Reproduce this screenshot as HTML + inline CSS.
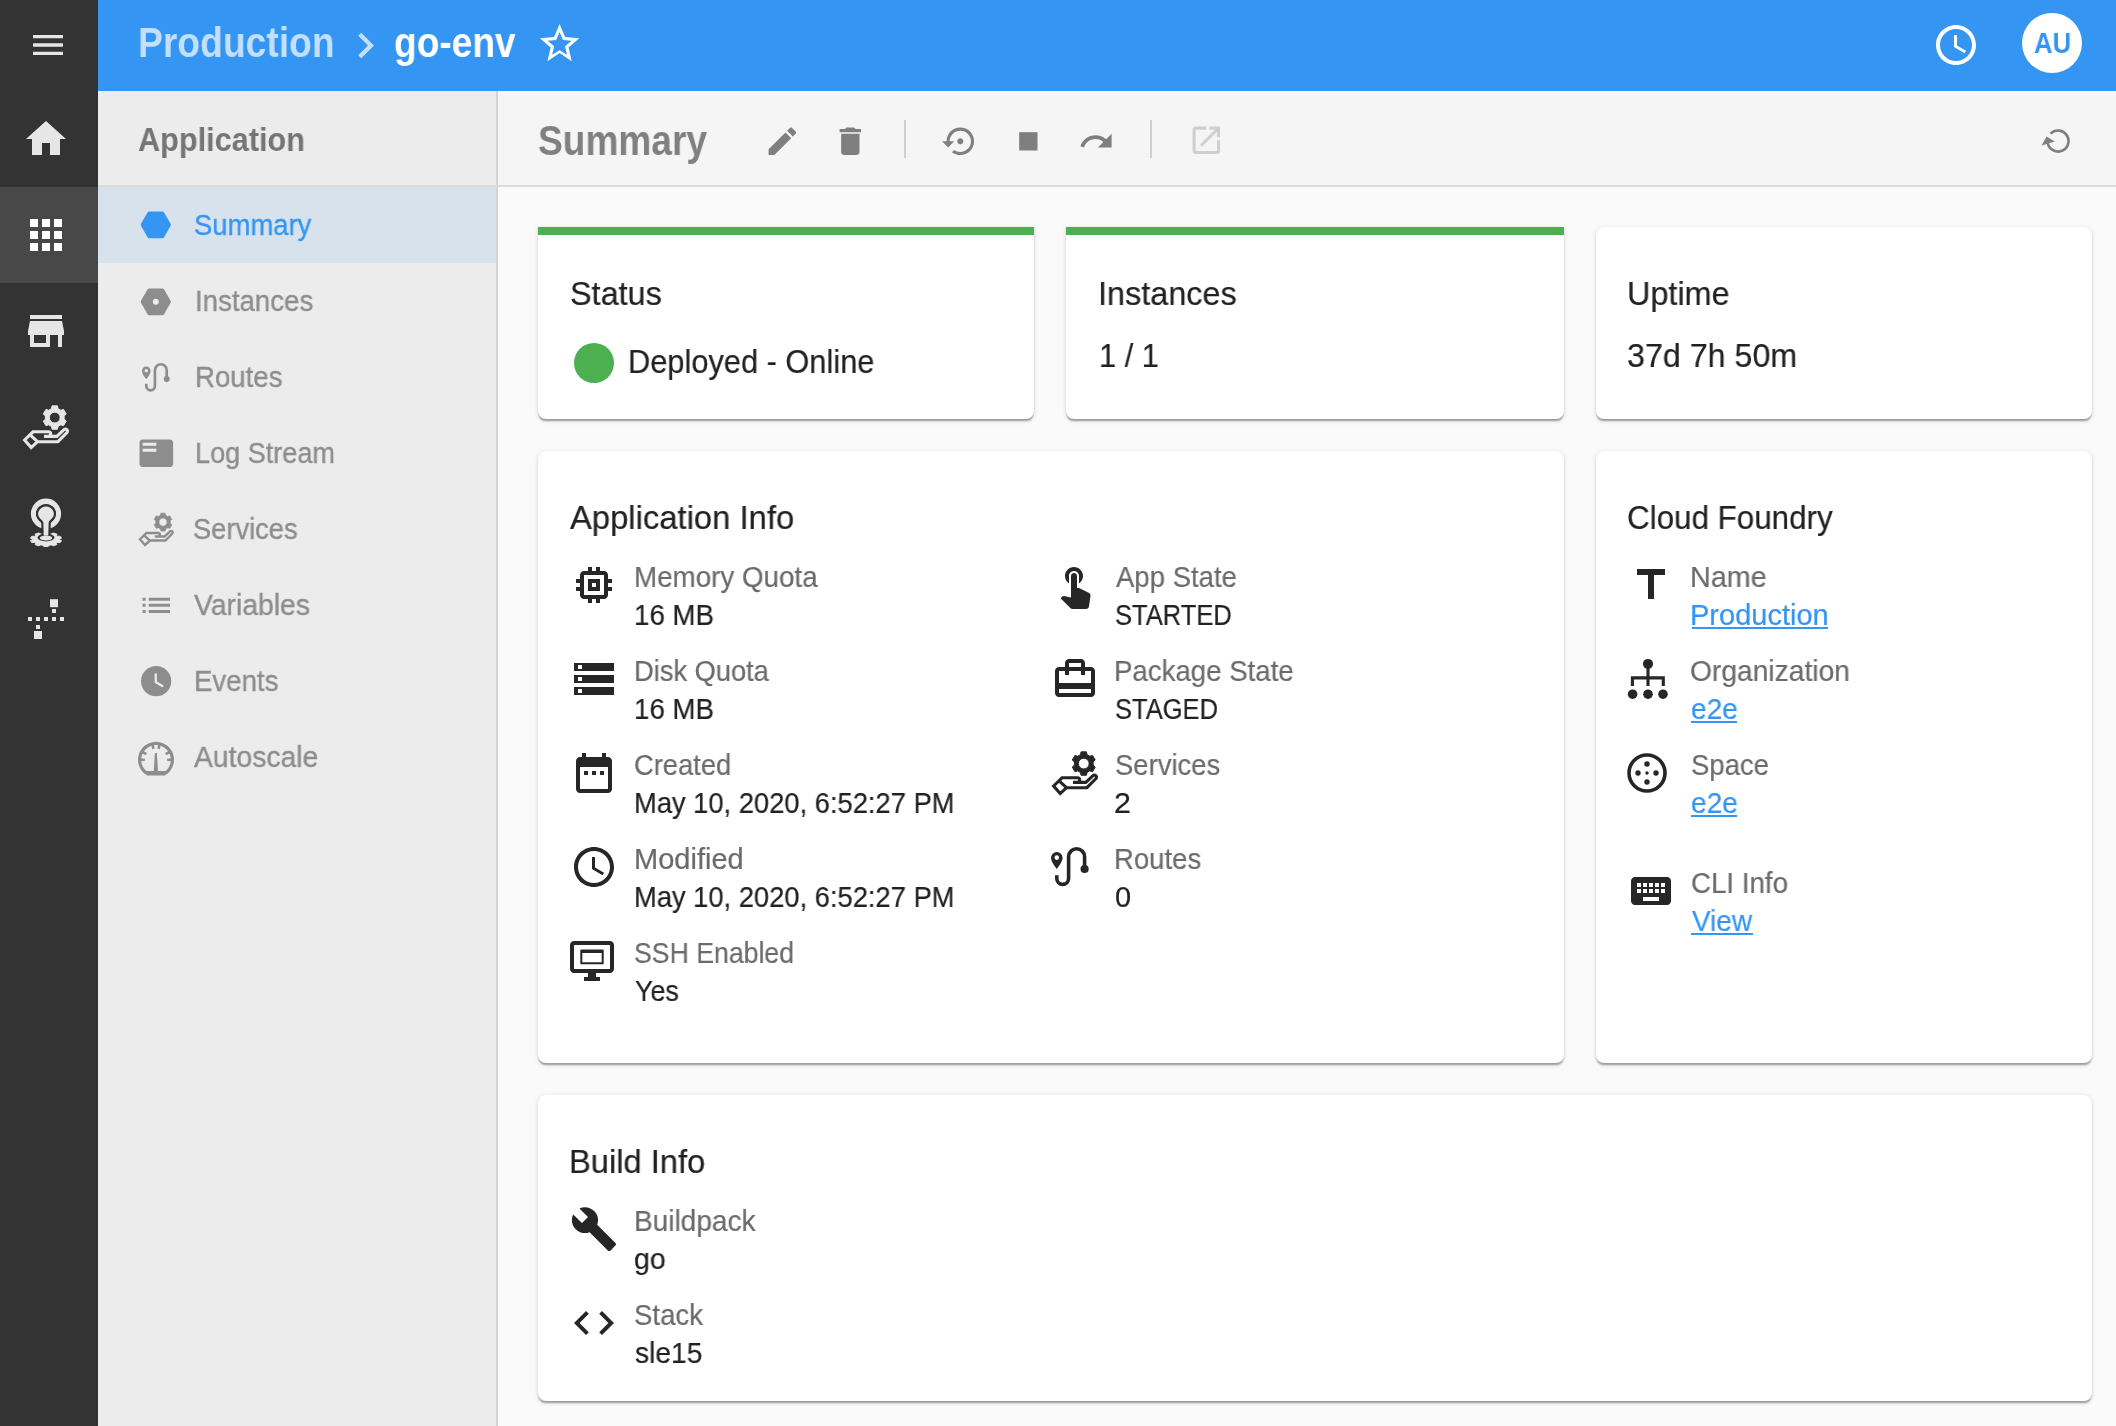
<!DOCTYPE html><html lang="en"><head><meta charset="utf-8"><title>go-env - Summary</title><style>

html,body{margin:0;padding:0;background:#fafafa}
body{width:2116px;height:1426px;position:relative;overflow:hidden;background:#fafafa;font-family:"Liberation Sans", sans-serif;color:#212121}
.b{position:absolute}
.t{position:absolute;white-space:nowrap;line-height:1;transform-origin:0 0;margin:0;font-weight:400;will-change:transform}
.i{position:absolute;display:block;overflow:visible}
.card{position:absolute;background:#fff;border-radius:8px;box-shadow:0 3.3px 1.7px -1.7px rgba(0,0,0,.2),0 1.7px 1.7px 0 rgba(0,0,0,.14),0 1.7px 5.5px 0 rgba(0,0,0,.12)}
.u{position:absolute;height:2px}
a{color:inherit;text-decoration:none}

</style></head><body>
<div class="b" style="left:98px;top:91px;width:399px;height:1335px;background:#ececec"></div>
<div class="b" style="left:496px;top:91px;width:2px;height:1335px;background:#d4d4d4"></div>
<div class="b" style="left:98px;top:187px;width:398px;height:75.7px;background:#d8e2ec"></div>
<div class="b" style="left:498px;top:91px;width:1618px;height:94px;background:#f5f5f5"></div>
<div class="b" style="left:98px;top:185px;width:2018px;height:2px;background:#dadada"></div>
<div class="b" style="left:98px;top:0;width:2018px;height:91px;background:#3595f3"></div>
<div class="b" style="left:0;top:0;width:98px;height:1426px;background:#333333"></div>
<div class="b" style="left:0;top:187px;width:98px;height:96px;background:#484848"></div>
<div class="b" style="left:904px;top:119.5px;width:2px;height:38.5px;background:#d0d0d0"></div>
<div class="b" style="left:1150px;top:119.5px;width:2px;height:38.5px;background:#d0d0d0"></div>
<div class="card" style="left:538px;top:227px;width:496px;height:192px;border-radius:0 0 8px 8px"><div class="b" style="left:0;top:0;width:100%;height:8px;background:#4caf50"></div></div>
<div class="card" style="left:1066px;top:227px;width:498px;height:192px;border-radius:0 0 8px 8px"><div class="b" style="left:0;top:0;width:100%;height:8px;background:#4caf50"></div></div>
<div class="card" style="left:1596px;top:227px;width:496px;height:192px"></div>
<div class="card" style="left:538px;top:451px;width:1026px;height:612px"></div>
<div class="card" style="left:1596px;top:451px;width:496px;height:612px"></div>
<div class="card" style="left:538px;top:1095px;width:1554px;height:306px"></div>
<div class="b" style="left:574px;top:342.8px;width:40px;height:40px;border-radius:50%;background:#4caf50"></div>
<div class="b" style="left:2022px;top:13px;width:60px;height:60px;border-radius:50%;background:#fff"></div>
<aside><svg class="i" style="left:28px;top:25px;width:40px;height:40px" viewBox="0 0 24 24"><path fill="#e6e6e6" d="M3 18h18v-2H3v2zm0-5h18v-2H3v2zm0-7v2h18V6H3z"/></svg>
<svg class="i" style="left:22px;top:115px;width:48px;height:48px" viewBox="0 0 24 24"><path fill="#e6e6e6" d="M10 20v-6h4v6h5v-8h3L12 3 2 12h3v8z"/></svg>
<svg class="i" style="left:22px;top:211px;width:48px;height:48px" viewBox="0 0 24 24"><path fill="#ffffff" d="M4 8h4V4H4v4zm6 12h4v-4h-4v4zm-6 0h4v-4H4v4zm0-6h4v-4H4v4zm6 0h4v-4h-4v4zm6-10v4h4V4h-4zm-6 4h4V4h-4v4zm6 6h4v-4h-4v4zm0 6h4v-4h-4v4z"/></svg>
<svg class="i" style="left:22px;top:307px;width:48px;height:48px" viewBox="0 0 24 24"><path fill="#e6e6e6" d="M20 4H4v2h16V4zm1 10v-2l-1-5H4l-1 5v2h1v6h10v-6h4v6h2v-6h1zm-9 4H6v-4h6v4z"/></svg>
<svg class="i" style="left:22px;top:403px;width:48px;height:48px" viewBox="0 0 24 24"><path fill="#e6e6e6" fill-rule="evenodd" stroke="#e6e6e6" stroke-width=".5" stroke-linejoin="round" d="M18 2.82 L17.73 1.43 L15.03 1.43 L14.76 2.82 L13.33 3.64 L11.99 3.19 L10.64 5.53 L11.7 6.46 L11.7 8.1 L10.64 9.03 L11.99 11.37 L13.33 10.92 L14.76 11.74 L15.03 13.13 L17.73 13.13 L18 11.74 L19.43 10.92 L20.77 11.37 L22.12 9.03 L21.06 8.1 L21.06 6.46 L22.12 5.53 L20.77 3.19 L19.43 3.64ZM13.68 7.28a2.7 2.7 0 1 0 5.4 0a2.7 2.7 0 1 0 -5.4 0Z"/><path fill="none" stroke="#e6e6e6" stroke-width="1.55" stroke-linejoin="miter" stroke-linecap="butt" d="M1.3 18.5L5.5 14.4H13.2a1.15 1.15 0 0 1 0 2.3H11 17.4L21.0 13.3a1.05 1.05 0 0 1 1.5 1.45L17.95 19.35H7.75L4.6 22.3ZM4.05 15.95L7.75 19.35"/></svg>
<svg class="i" style="left:22px;top:499px;width:48px;height:48px" viewBox="0 0 48 48"><circle cx="24" cy="14.7" r="12.45" fill="none" stroke="#e6e6e6" stroke-width="5.3"/><polygon fill="#e6e6e6" stroke="#e6e6e6" stroke-width="1" stroke-linejoin="round" points="37.55,40.92 39.56,41.65 38.2,43.56 35.66,43.49 34.26,44.34 34.98,45.58 31.42,46.76 29.31,45.92 27.06,46.25 26.2,47.53 21.8,47.53 20.94,46.25 18.69,45.92 16.58,46.76 13.02,45.58 13.74,44.34 12.34,43.49 9.8,43.56 8.44,41.65 10.45,40.92 10.45,39.88 8.44,39.15 9.8,37.24 12.34,37.31 13.74,36.46 13.02,35.22 16.58,34.04 18.69,34.88 20.94,34.55 21.8,33.27 26.2,33.27 27.06,34.55 29.31,34.88 31.42,34.04 34.98,35.22 34.26,36.46 35.66,37.31 38.2,37.24 39.56,39.15 37.55,39.88"/><ellipse cx="24" cy="38.5" rx="8.45" ry="3.9" fill="#333333"/><path d="M24 7.4C28.4 7.4 31.9 10.9 31.9 15C31.9 18.5 28 20.5 26.65 23.4L26.3 36.4H21.7L21.35 23.4C20 20.5 16.1 18.5 16.1 15C16.1 10.9 19.6 7.4 24 7.4Z" fill="#333333" stroke="#333333" stroke-width="4.3" stroke-linejoin="round"/><path d="M24 7.4C28.4 7.4 31.9 10.9 31.9 15C31.9 18.5 28 20.5 26.65 23.4L26.3 36.4H21.7L21.35 23.4C20 20.5 16.1 18.5 16.1 15C16.1 10.9 19.6 7.4 24 7.4Z" fill="#e6e6e6"/><ellipse cx="24" cy="39" rx="6.2" ry="2.4" fill="#e6e6e6"/></svg>
<svg class="i" style="left:22px;top:595px;width:48px;height:48px" viewBox="0 0 48 48"><rect x="28" y="4.2" width="8" height="8" fill="#e6e6e6"/><rect x="30" y="14" width="4" height="4" fill="#e6e6e6"/><rect x="6" y="22" width="4" height="4" fill="#e6e6e6"/><rect x="14" y="22" width="4" height="4" fill="#e6e6e6"/><rect x="22" y="22" width="4" height="4" fill="#e6e6e6"/><rect x="30" y="22" width="4" height="4" fill="#e6e6e6"/><rect x="38" y="22" width="4" height="4" fill="#e6e6e6"/><rect x="14" y="30" width="4" height="4" fill="#e6e6e6"/><rect x="12" y="36" width="8" height="8" fill="#e6e6e6"/></svg></aside>
<header><svg class="i" style="left:340px;top:19.75px;width:51px;height:51px" viewBox="0 0 24 24"><path fill="#c2dffb" d="M10 6L8.59 7.41 13.17 12l-4.58 4.59L10 18l6-6z"/></svg>
<svg class="i" style="left:536.35px;top:19.6px;width:47.2px;height:47.2px" viewBox="0 0 24 24"><path fill="#ffffff" d="M22 9.24l-7.19-.62L12 2 9.19 8.63 2 9.24l5.46 4.73L5.82 21 12 16.77 18.18 21l-1.63-7.03L22 9.24zM12 15.4l-3.76 2.27 1-4.28-3.32-2.88 4.38-.38L12 6.1l1.71 4.04 4.38.38-3.32 2.88 1 4.28L12 15.4z"/></svg>
<svg class="i" style="left:1932px;top:21px;width:48px;height:48px" viewBox="0 0 24 24"><path fill="#ffffff" d="M11.99 2C6.47 2 2 6.48 2 12s4.47 10 9.99 10C17.52 22 22 17.52 22 12S17.52 2 11.99 2zM12 20c-4.42 0-8-3.58-8-8s3.58-8 8-8 8 3.58 8 8-3.58 8-8 8zm.5-13H11v6l5.25 3.15.75-1.23-4.5-2.67z"/></svg>
<span class="t" style="left:137.67px;top:21.84px;font-size:42px;color:#c2dffb;transform:scaleX(0.8871);font-weight:700">Production</span>
<span class="t" style="left:394.14px;top:21.84px;font-size:42px;color:#ffffff;transform:scaleX(0.8835);font-weight:700">go-env</span>
<span class="t" style="left:2033.5px;top:28.85px;font-size:29px;color:#3595f3;transform:scaleX(0.8856);font-weight:700">AU</span></header>
<nav><svg class="i" style="left:139.2px;top:208.4px;width:33.6px;height:33.6px" viewBox="0 0 33.6 33.6"><polygon fill="#3595f3" stroke="#3595f3" stroke-width="4" stroke-linejoin="round" points="29.9,16.8 23.35,28.14 10.25,28.14 3.7,16.8 10.25,5.46 23.35,5.46"/></svg>
<svg class="i" style="left:139.4px;top:284.6px;width:33.6px;height:33.6px" viewBox="0 0 33.6 33.6"><polygon fill="#8d8d8d" stroke="#8d8d8d" stroke-width="4" stroke-linejoin="round" points="29.9,16.8 23.35,28.14 10.25,28.14 3.7,16.8 10.25,5.46 23.35,5.46"/><circle cx="16.8" cy="16.8" r="3" fill="#ececec"/></svg>
<svg class="i" style="left:142.25px;top:360.45px;width:35.3px;height:35.3px" viewBox="0 0 24 24"><path fill="#8d8d8d" d="M2.9 4.5a2.9 2.9 0 0 0 -2.9 2.9c0 2.2 2.9 5.6 2.9 5.6s2.9-3.4 2.9-5.6a2.9 2.9 0 0 0 -2.9-2.9z"/><circle cx="2.9" cy="7.3" r="1.15" fill="#ececec"/><path fill="none" stroke="#8d8d8d" stroke-width="1.8" d="M2.9 16.1v1.65a2.95 2.95 0 0 0 5.9 0V6.9a4 4 0 0 1 8 0V13"/><circle cx="16.8" cy="13" r="2.05" fill="#8d8d8d"/></svg>
<svg class="i" style="left:137.76px;top:434.67px;width:36.67px;height:36.67px" viewBox="0 0 24 24"><path fill="#8d8d8d" d="M21 3H3c-1.1 0-2 .9-2 2v14c0 1.1.9 2 2 2h18c1.1 0 2-.9 2-2V5c0-1.1-.9-2-2-2zm-9 8H3V9h9v2zm0-4H3V5h9v2z"/></svg>
<svg class="i" style="left:137.76px;top:511.27px;width:36.67px;height:36.67px" viewBox="0 0 24 24"><path fill="#8d8d8d" fill-rule="evenodd" stroke="#8d8d8d" stroke-width=".5" stroke-linejoin="round" d="M18 2.82 L17.73 1.43 L15.03 1.43 L14.76 2.82 L13.33 3.64 L11.99 3.19 L10.64 5.53 L11.7 6.46 L11.7 8.1 L10.64 9.03 L11.99 11.37 L13.33 10.92 L14.76 11.74 L15.03 13.13 L17.73 13.13 L18 11.74 L19.43 10.92 L20.77 11.37 L22.12 9.03 L21.06 8.1 L21.06 6.46 L22.12 5.53 L20.77 3.19 L19.43 3.64ZM13.68 7.28a2.7 2.7 0 1 0 5.4 0a2.7 2.7 0 1 0 -5.4 0Z"/><path fill="none" stroke="#8d8d8d" stroke-width="1.55" stroke-linejoin="miter" stroke-linecap="butt" d="M1.3 18.5L5.5 14.4H13.2a1.15 1.15 0 0 1 0 2.3H11 17.4L21.0 13.3a1.05 1.05 0 0 1 1.5 1.45L17.95 19.35H7.75L4.6 22.3ZM4.05 15.95L7.75 19.35"/></svg>
<svg class="i" style="left:137.86px;top:586.66px;width:36.67px;height:36.67px" viewBox="0 0 24 24"><path fill="#8d8d8d" d="M3 13h2v-2H3v2zm0 4h2v-2H3v2zm0-8h2V7H3v2zm4 4h14v-2H7v2zm0 4h14v-2H7v2zM7 7v2h14V7H7z"/></svg>
<svg class="i" style="left:137.65px;top:662.65px;width:36.3px;height:36.3px" viewBox="0 0 24 24"><path fill="#8d8d8d" d="M12 2C6.5 2 2 6.5 2 12s4.5 10 10 10 10-4.5 10-10S17.5 2 12 2zm4.2 14.2L11 13V7h1.5v5.2l4.5 2.7-.8 1.3z"/></svg>
<svg class="i" style="left:136px;top:739px;width:40px;height:40px" viewBox="0 0 40 40"><path fill="#8d8d8d" fill-rule="evenodd" d="M11.38 36.6A18 18 0 1 1 28.62 36.6ZM10.44 32.1A14.8 14.8 0 1 1 29.56 32.1Z"/><path fill="#8d8d8d" d="M18.9 13.9h2l1.15 19h-4.3z"/><path stroke="#8d8d8d" stroke-width="2.6" d="M4.5 20.8L8.8 20.8"/><path stroke="#8d8d8d" stroke-width="2.6" d="M6.58 13.05L10.3 15.2"/><path stroke="#8d8d8d" stroke-width="2.6" d="M16.51 5.7L17.48 9.89"/><path stroke="#8d8d8d" stroke-width="2.6" d="M23.49 5.7L22.52 9.89"/><path stroke="#8d8d8d" stroke-width="2.6" d="M33.42 13.05L29.7 15.2"/><path stroke="#8d8d8d" stroke-width="2.6" d="M35.5 20.8L31.2 20.8"/></svg>
<span class="t" style="left:137.52px;top:123.46px;font-size:33px;color:#757575;transform:scaleX(0.9293);font-weight:700">Application</span>
<span class="t" style="left:193.89px;top:210.85px;font-size:29px;color:#3595f3;transform:scaleX(0.9459);-webkit-text-stroke:.35px #3595f3">Summary</span>
<span class="t" style="left:194.54px;top:286.85px;font-size:29px;color:#8d8d8d;transform:scaleX(0.9524);-webkit-text-stroke:.35px #8d8d8d">Instances</span>
<span class="t" style="left:194.54px;top:362.85px;font-size:29px;color:#8d8d8d;transform:scaleX(0.9514);-webkit-text-stroke:.35px #8d8d8d">Routes</span>
<span class="t" style="left:194.59px;top:438.85px;font-size:29px;color:#8d8d8d;transform:scaleX(0.9333);-webkit-text-stroke:.35px #8d8d8d">Log Stream</span>
<span class="t" style="left:193.45px;top:514.85px;font-size:29px;color:#8d8d8d;transform:scaleX(0.9407);-webkit-text-stroke:.35px #8d8d8d">Services</span>
<span class="t" style="left:194.3px;top:590.85px;font-size:29px;color:#8d8d8d;transform:scaleX(0.9767);-webkit-text-stroke:.35px #8d8d8d">Variables</span>
<span class="t" style="left:193.84px;top:666.85px;font-size:29px;color:#8d8d8d;transform:scaleX(0.9522);-webkit-text-stroke:.35px #8d8d8d">Events</span>
<span class="t" style="left:194.3px;top:742.85px;font-size:29px;color:#8d8d8d;transform:scaleX(0.9756);-webkit-text-stroke:.35px #8d8d8d">Autoscale</span></nav>
<main><section><svg class="i" style="left:763.91px;top:122.66px;width:36.67px;height:36.67px" viewBox="0 0 24 24"><path fill="#7f7f7f" d="M3 17.25V21h3.75L17.81 9.94l-3.75-3.75L3 17.25zM20.71 7.04c.39-.39.39-1.02 0-1.41l-2.34-2.34c-.39-.39-1.02-.39-1.41 0l-1.83 1.83 3.75 3.75 1.83-1.83z"/></svg>
<svg class="i" style="left:832.26px;top:122.66px;width:36.67px;height:36.67px" viewBox="0 0 24 24"><path fill="#7f7f7f" d="M6 19c0 1.1.9 2 2 2h8c1.1 0 2-.9 2-2V7H6v12zM19 4h-3.5l-1-1h-5l-1 1H5v2h14V4z"/></svg>
<svg class="i" style="left:942.16px;top:122.66px;width:36.67px;height:36.67px" viewBox="0 0 24 24"><path fill="#7f7f7f" d="M14 12c0-1.1-.9-2-2-2s-2 .9-2 2 .9 2 2 2 2-.9 2-2zm-2-9c-4.97 0-9 4.03-9 9H0l4 4 4-4H5c0-3.87 3.13-7 7-7s7 3.13 7 7-3.13 7-7 7c-1.51 0-2.91-.49-4.06-1.3l-1.42 1.44C8.04 20.3 9.94 21 12 21c4.97 0 9-4.03 9-9s-4.03-9-9-9z"/></svg>
<svg class="i" style="left:1009.76px;top:122.66px;width:36.67px;height:36.67px" viewBox="0 0 24 24"><path fill="#7f7f7f" d="M6 6h12v12H6z"/></svg>
<svg class="i" style="left:1078.37px;top:122.66px;width:36.67px;height:36.67px" viewBox="0 0 24 24"><path fill="#7f7f7f" d="M18.4 10.6C16.55 8.99 14.15 8 11.5 8c-4.65 0-8.58 3.03-9.96 7.22L3.9 16c1.05-3.19 4.05-5.5 7.6-5.5 1.95 0 3.73.72 5.12 1.88L13 16h9V7l-3.6 3.6z"/></svg>
<svg class="i" style="left:1187.91px;top:122.41px;width:36.67px;height:36.67px" viewBox="0 0 24 24"><path fill="#cfcfcf" d="M19 19H5V5h7V3H5c-1.11 0-2 .9-2 2v14c0 1.1.89 2 2 2h14c1.1 0 2-.9 2-2v-7h-2v7zM14 3v2h3.59l-9.83 9.83 1.41 1.41L19 6.41V10h2V3h-7z"/></svg>
<svg class="i" style="left:2038.3px;top:120.8px;width:40px;height:40px" viewBox="0 0 40 40"><path fill="none" stroke="#7f7f7f" stroke-width="2.7" d="M12.58 12.58A10.5 10.5 0 1 1 9.53 20.73"/><polygon fill="#7f7f7f" points="8.6,15.6 16.9,20.45 3.6,24.6"/></svg>
<span class="t" style="left:538.22px;top:119.84px;font-size:42px;color:#808080;transform:scaleX(0.8831);font-weight:700">Summary</span></section>
<section><svg class="i" style="left:570px;top:561px;width:48px;height:48px" viewBox="0 0 24 24"><path fill="#262626" d="M15 9H9v6h6V9zm-2 4h-2v-2h2v2zm8-2V9h-2V7c0-1.1-.9-2-2-2h-2V3h-2v2h-2V3H9v2H7c-1.1 0-2 .9-2 2v2H3v2h2v2H3v2h2v2c0 1.1.9 2 2 2h2v2h2v-2h2v2h2v-2h2c1.1 0 2-.9 2-2v-2h2v-2h-2v-2h2zm-4 6H7V7h10v10z"/></svg>
<svg class="i" style="left:570px;top:655px;width:48px;height:48px" viewBox="0 0 24 24"><path fill="#262626" d="M2 20h20v-4H2v4zm2-3h2v2H4v-2zM2 4v4h20V4H2zm4 3H4V5h2v2zm-4 7h20v-4H2v4zm2-3h2v2H4v-2z"/></svg>
<svg class="i" style="left:570.1px;top:748.8px;width:48px;height:48px" viewBox="0 0 24 24"><path fill="#262626" d="M9 11H7v2h2v-2zm4 0h-2v2h2v-2zm4 0h-2v2h2v-2zm2-7h-1V2h-2v2H8V2H6v2H5c-1.11 0-1.99.9-1.99 2L3 20c0 1.1.89 2 2 2h14c1.1 0 2-.9 2-2V6c0-1.1-.9-2-2-2zm0 16H5V9h14v11z"/></svg>
<svg class="i" style="left:569.9px;top:842.8px;width:48px;height:48px" viewBox="0 0 24 24"><path fill="#262626" d="M11.99 2C6.47 2 2 6.48 2 12s4.47 10 9.99 10C17.52 22 22 17.52 22 12S17.52 2 11.99 2zM12 20c-4.42 0-8-3.58-8-8s3.58-8 8-8 8 3.58 8 8-3.58 8-8 8zm.5-13H11v6l5.25 3.15.75-1.23-4.5-2.67z"/></svg>
<svg class="i" style="left:567.9px;top:937.2px;width:48px;height:48px" viewBox="0 0 24 24"><path fill="#262626" d="M21 2H3c-1.1 0-2 .9-2 2v12c0 1.1.9 2 2 2h7v2H8v2h8v-2h-2v-2h7c1.1 0 2-.9 2-2V4c0-1.1-.9-2-2-2zm0 14H3V4h18v12z"/><path fill="#262626" fill-rule="evenodd" d="M6.65 6.2h10.7c.3 0 .5.2.5.5v6.4c0 .3-.2.5-.5.5H6.65c-.3 0-.5-.2-.5-.5V6.7c0-.3.2-.5.5-.5zM7.15 8v4.65h9.7V8z"/></svg>
<svg class="i" style="left:1051px;top:561px;width:48px;height:48px" viewBox="0 0 24 24"><path fill="#262626" d="M9 11.24V7.5C9 6.12 10.12 5 11.5 5S14 6.12 14 7.5v3.74c1.21-.81 2-2.18 2-3.74C16 5.01 13.99 3 11.5 3S7 5.01 7 7.5c0 1.56.79 2.93 2 3.74zm9.84 4.63l-4.54-2.26c-.17-.07-.35-.11-.54-.11H13v-6c0-.83-.67-1.5-1.5-1.5S10 6.67 10 7.5v10.74l-3.43-.72c-.08-.01-.15-.03-.24-.03-.31 0-.59.13-.79.33l-.79.8 4.94 4.94c.27.27.65.44 1.06.44h6.79c.75 0 1.33-.55 1.44-1.28l.75-5.27c.01-.07.02-.14.02-.2 0-.62-.38-1.16-.91-1.38z"/></svg>
<svg class="i" style="left:1050.8px;top:655px;width:48px;height:48px" viewBox="0 0 24 24"><path fill="#262626" d="M20 6h-3V4c0-1.11-.89-2-2-2H9c-1.11 0-2 .89-2 2v2H4c-1.11 0-2 .89-2 2v11c0 1.11.89 2 2 2h16c1.11 0 2-.89 2-2V8c0-1.11-.89-2-2-2zM9 4h6v2H9V4zm11 15H4v-2h16v2zm0-5H4V8h3v2h2V8h6v2h2V8h3v6z"/></svg>
<svg class="i" style="left:1051px;top:749px;width:48px;height:48px" viewBox="0 0 24 24"><path fill="#262626" fill-rule="evenodd" stroke="#262626" stroke-width=".5" stroke-linejoin="round" d="M18 2.82 L17.73 1.43 L15.03 1.43 L14.76 2.82 L13.33 3.64 L11.99 3.19 L10.64 5.53 L11.7 6.46 L11.7 8.1 L10.64 9.03 L11.99 11.37 L13.33 10.92 L14.76 11.74 L15.03 13.13 L17.73 13.13 L18 11.74 L19.43 10.92 L20.77 11.37 L22.12 9.03 L21.06 8.1 L21.06 6.46 L22.12 5.53 L20.77 3.19 L19.43 3.64ZM13.68 7.28a2.7 2.7 0 1 0 5.4 0a2.7 2.7 0 1 0 -5.4 0Z"/><path fill="none" stroke="#262626" stroke-width="1.55" stroke-linejoin="miter" stroke-linecap="butt" d="M1.3 18.5L5.5 14.4H13.2a1.15 1.15 0 0 1 0 2.3H11 17.4L21.0 13.3a1.05 1.05 0 0 1 1.5 1.45L17.95 19.35H7.75L4.6 22.3ZM4.05 15.95L7.75 19.35"/></svg>
<svg class="i" style="left:1051px;top:843px;width:48px;height:48px" viewBox="0 0 24 24"><path fill="#262626" d="M2.9 4.5a2.9 2.9 0 0 0 -2.9 2.9c0 2.2 2.9 5.6 2.9 5.6s2.9-3.4 2.9-5.6a2.9 2.9 0 0 0 -2.9-2.9z"/><circle cx="2.9" cy="7.3" r="1.15" fill="#ffffff"/><path fill="none" stroke="#262626" stroke-width="1.8" d="M2.9 16.1v1.65a2.95 2.95 0 0 0 5.9 0V6.9a4 4 0 0 1 8 0V13"/><circle cx="16.8" cy="13" r="2.05" fill="#262626"/></svg>
<svg class="i" style="left:1627.1px;top:561px;width:48px;height:48px" viewBox="0 0 24 24"><path fill="#262626" d="M5 4v3h5.5v12h3V7H19V4z"/></svg>
<svg class="i" style="left:1623.5px;top:655px;width:48px;height:48px" viewBox="0 0 48 48"><circle cx="24" cy="8.9" r="5" fill="#262626"/><circle cx="8.6" cy="39.2" r="4.8" fill="#262626"/><circle cx="24" cy="39.2" r="4.8" fill="#262626"/><circle cx="39" cy="39.2" r="4.8" fill="#262626"/><path fill="none" stroke="#262626" stroke-width="3.1" d="M24 10V31M8.4 31V22.9H39.3V31"/></svg>
<svg class="i" style="left:1623.05px;top:749.2px;width:48px;height:48px" viewBox="0 0 48 48"><circle cx="24" cy="24" r="18" fill="none" stroke="#262626" stroke-width="3.6"/><circle cx="24" cy="15" r="2.7" fill="#262626"/><circle cx="24" cy="33" r="2.7" fill="#262626"/><circle cx="15" cy="24" r="2.7" fill="#262626"/><circle cx="33" cy="24" r="2.7" fill="#262626"/><circle cx="24" cy="24" r="1.7" fill="#262626"/></svg>
<svg class="i" style="left:1627.2px;top:866.9px;width:48px;height:48px" viewBox="0 0 24 24"><path fill="#262626" d="M20 5H4c-1.1 0-1.99.9-1.99 2L2 17c0 1.1.9 2 2 2h16c1.1 0 2-.9 2-2V7c0-1.1-.9-2-2-2zm-9 3h2v2h-2V8zm0 3h2v2h-2v-2zM8 8h2v2H8V8zm0 3h2v2H8v-2zm-1 2H5v-2h2v2zm0-3H5V8h2v2zm9 7H8v-2h8v2zm0-4h-2v-2h2v2zm0-3h-2V8h2v2zm3 3h-2v-2h2v2zm0-3h-2V8h2v2z"/></svg>
<svg class="i" style="left:570px;top:1205px;width:48px;height:48px" viewBox="0 0 24 24"><path fill="#262626" d="M22.7 19l-9.1-9.1c.9-2.3.4-5-1.5-6.9-2-2-5-2.4-7.4-1.3L9 6 6 9 1.6 4.7C.4 7.1.9 10.1 2.9 12.1c1.9 1.9 4.6 2.4 6.9 1.5l9.1 9.1c.4.4 1 .4 1.4 0l2.3-2.3c.5-.4.5-1.1.1-1.4z"/></svg>
<svg class="i" style="left:570px;top:1299px;width:48px;height:48px" viewBox="0 0 24 24"><path fill="#262626" d="M9.4 16.6L4.8 12l4.6-4.6L8 6l-6 6 6 6 1.4-1.4zm5.2 0l4.6-4.6-4.6-4.6L16 6l6 6-6 6-1.4-1.4z"/></svg>
<span class="t" style="left:569.69px;top:277.04px;font-size:33.5px;color:#212121;transform:scaleX(0.9669);-webkit-text-stroke:.2px #212121">Status</span>
<span class="t" style="left:628.1px;top:345.04px;font-size:33.5px;color:#212121;transform:scaleX(0.9189);-webkit-text-stroke:.2px #212121">Deployed - Online</span>
<span class="t" style="left:1098.37px;top:277.04px;font-size:33.5px;color:#212121;transform:scaleX(0.9669);-webkit-text-stroke:.2px #212121">Instances</span>
<span class="t" style="left:1098.98px;top:339.04px;font-size:33.5px;color:#212121;transform:scaleX(0.9185);-webkit-text-stroke:.2px #212121">1 / 1</span>
<span class="t" style="left:1626.98px;top:277.04px;font-size:33.5px;color:#212121;transform:scaleX(0.9668);-webkit-text-stroke:.2px #212121">Uptime</span>
<span class="t" style="left:1627.49px;top:339.04px;font-size:33.5px;color:#212121;transform:scaleX(0.9618);-webkit-text-stroke:.2px #212121">37d 7h 50m</span>
<span class="t" style="left:570.4px;top:501.04px;font-size:33.5px;color:#212121;transform:scaleX(0.9786);-webkit-text-stroke:.2px #212121">Application Info</span>
<span class="t" style="left:1626.53px;top:501.04px;font-size:33.5px;color:#212121;transform:scaleX(0.9360);-webkit-text-stroke:.2px #212121">Cloud Foundry</span>
<span class="t" style="left:569.05px;top:1145.04px;font-size:33.5px;color:#212121;transform:scaleX(0.9757);-webkit-text-stroke:.2px #212121">Build Info</span>
<span class="t" style="left:633.73px;top:562.85px;font-size:29px;color:#6b6b6b;transform:scaleX(0.9573);-webkit-text-stroke:.2px #6b6b6b">Memory Quota</span>
<span class="t" style="left:634.17px;top:600.85px;font-size:29px;color:#212121;transform:scaleX(0.9544);-webkit-text-stroke:.2px #212121">16 MB</span>
<span class="t" style="left:633.77px;top:656.85px;font-size:29px;color:#6b6b6b;transform:scaleX(0.9398);-webkit-text-stroke:.2px #6b6b6b">Disk Quota</span>
<span class="t" style="left:634.17px;top:694.85px;font-size:29px;color:#212121;transform:scaleX(0.9544);-webkit-text-stroke:.2px #212121">16 MB</span>
<span class="t" style="left:634.02px;top:750.85px;font-size:29px;color:#6b6b6b;transform:scaleX(0.9423);-webkit-text-stroke:.2px #6b6b6b">Created</span>
<span class="t" style="left:633.67px;top:788.85px;font-size:29px;color:#212121;transform:scaleX(0.9421);-webkit-text-stroke:.2px #212121">May 10, 2020, 6:52:27 PM</span>
<span class="t" style="left:633.63px;top:844.85px;font-size:29px;color:#6b6b6b;transform:scaleX(1.0008);-webkit-text-stroke:.2px #6b6b6b">Modified</span>
<span class="t" style="left:633.67px;top:882.85px;font-size:29px;color:#212121;transform:scaleX(0.9421);-webkit-text-stroke:.2px #212121">May 10, 2020, 6:52:27 PM</span>
<span class="t" style="left:634.47px;top:938.85px;font-size:29px;color:#6b6b6b;transform:scaleX(0.9191);-webkit-text-stroke:.2px #6b6b6b">SSH Enabled</span>
<span class="t" style="left:634.78px;top:976.85px;font-size:29px;color:#212121;transform:scaleX(0.9271);-webkit-text-stroke:.2px #212121">Yes</span>
<span class="t" style="left:1115.75px;top:562.85px;font-size:29px;color:#6b6b6b;transform:scaleX(0.9489);-webkit-text-stroke:.2px #6b6b6b">App State</span>
<span class="t" style="left:1114.95px;top:600.85px;font-size:29px;color:#212121;transform:scaleX(0.8795);-webkit-text-stroke:.2px #212121">STARTED</span>
<span class="t" style="left:1114.44px;top:656.85px;font-size:29px;color:#6b6b6b;transform:scaleX(0.9526);-webkit-text-stroke:.2px #6b6b6b">Package State</span>
<span class="t" style="left:1114.95px;top:694.85px;font-size:29px;color:#212121;transform:scaleX(0.8791);-webkit-text-stroke:.2px #212121">STAGED</span>
<span class="t" style="left:1114.89px;top:750.85px;font-size:29px;color:#6b6b6b;transform:scaleX(0.9462);-webkit-text-stroke:.2px #6b6b6b">Services</span>
<span class="t" style="left:1114.33px;top:788.85px;font-size:29px;color:#212121;transform:scaleX(1.0483);-webkit-text-stroke:.2px #212121">2</span>
<span class="t" style="left:1114.45px;top:844.85px;font-size:29px;color:#6b6b6b;transform:scaleX(0.9486);-webkit-text-stroke:.2px #6b6b6b">Routes</span>
<span class="t" style="left:1114.86px;top:882.85px;font-size:29px;color:#212121;transform:scaleX(0.9828);-webkit-text-stroke:.2px #212121">0</span>
<span class="t" style="left:1690.15px;top:562.85px;font-size:29px;color:#6b6b6b;transform:scaleX(0.9917);-webkit-text-stroke:.2px #6b6b6b">Name</span>
<span class="t" style="left:1690.14px;top:600.85px;font-size:29px;color:#3595f3;transform:scaleX(0.9989);-webkit-text-stroke:.2px #3595f3"><a>Production</a></span><div class="u" style="left:1691.9px;top:627.2px;width:136.1px;background:#3595f3"></div>
<span class="t" style="left:1690.38px;top:656.85px;font-size:29px;color:#6b6b6b;transform:scaleX(0.9725);-webkit-text-stroke:.2px #6b6b6b">Organization</span>
<span class="t" style="left:1690.82px;top:694.85px;font-size:29px;color:#3595f3;transform:scaleX(0.9675);-webkit-text-stroke:.2px #3595f3"><a>e2e</a></span><div class="u" style="left:1691.2px;top:721.2px;width:46.3px;background:#3595f3"></div>
<span class="t" style="left:1690.84px;top:750.85px;font-size:29px;color:#6b6b6b;transform:scaleX(0.9495);-webkit-text-stroke:.2px #6b6b6b">Space</span>
<span class="t" style="left:1690.82px;top:788.85px;font-size:29px;color:#3595f3;transform:scaleX(0.9675);-webkit-text-stroke:.2px #3595f3"><a>e2e</a></span><div class="u" style="left:1691.2px;top:815.2px;width:46.3px;background:#3595f3"></div>
<span class="t" style="left:1691px;top:868.85px;font-size:29px;color:#6b6b6b;transform:scaleX(0.9553);-webkit-text-stroke:.2px #6b6b6b">CLI Info</span>
<span class="t" style="left:1691.5px;top:906.85px;font-size:29px;color:#3595f3;transform:scaleX(0.9619);-webkit-text-stroke:.2px #3595f3"><a>View</a></span><div class="u" style="left:1691px;top:933.2px;width:61.8px;background:#3595f3"></div>
<span class="t" style="left:633.71px;top:1206.85px;font-size:29px;color:#6b6b6b;transform:scaleX(0.9667);-webkit-text-stroke:.2px #6b6b6b">Buildpack</span>
<span class="t" style="left:634.11px;top:1244.85px;font-size:29px;color:#212121;transform:scaleX(0.9776);-webkit-text-stroke:.2px #212121">go</span>
<span class="t" style="left:634.14px;top:1300.85px;font-size:29px;color:#6b6b6b;transform:scaleX(0.9518);-webkit-text-stroke:.2px #6b6b6b">Stack</span>
<span class="t" style="left:634.56px;top:1338.85px;font-size:29px;color:#212121;transform:scaleX(0.9719);-webkit-text-stroke:.2px #212121">sle15</span></section></main>
</body></html>
